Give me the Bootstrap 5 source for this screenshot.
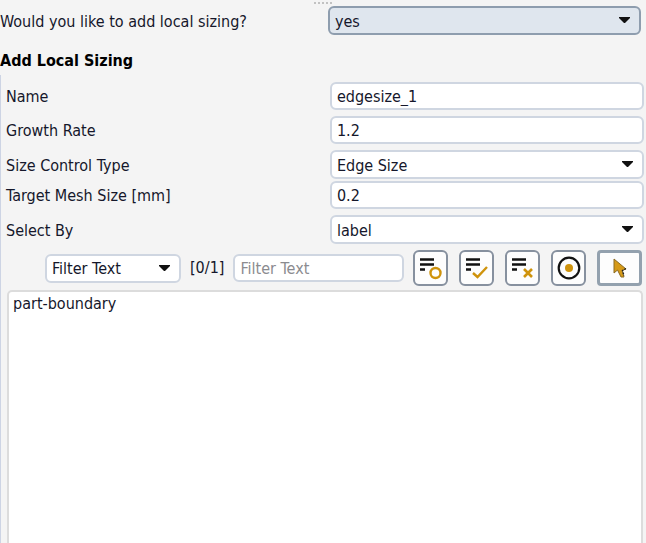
<!DOCTYPE html>
<html lang="en">
<head>
<meta charset="utf-8">
<meta name="viewport" content="width=device-width, initial-scale=1">
<title>Add Local Sizing</title>
<link href="https://cdn.jsdelivr.net/npm/bootstrap@5.3.0/dist/css/bootstrap.min.css" rel="stylesheet">
<style>
  body { background: #f4f4f4; color: #15172b; font: 16px/20px "DejaVu Sans Condensed", "Noto Sans", sans-serif; }
  .grip { height: 6px; }
  .grip svg { display: block; }
  .field-label { flex: 0 0 calc(51% + 1px); padding-top: 2px; }
  .section-title { font-size: 16px; line-height: 20px; color: #000; margin: 16px 0 4px; }
  .panel { border-left: 1px solid #cdd4e4; padding: 7px 2px 0 0; }
  .field-rows { gap: 6px; }
  .panel .field-label { padding-left: 5px; }
  .form-control, .form-select {
    height: 28px; min-height: 0; padding: 1px 5px 0; font-size: 16px; line-height: 20px;
    color: #15172b; background-color: #fff; border: 2px solid #cfd6e1; border-radius: 6px;
  }
  .form-select {
    height: 29px; padding-top: 2px; padding-right: 24px; background-size: 11px 6px; background-position: right 9px top 9px;
    background-image: url("data:image/svg+xml,%3Csvg xmlns='http://www.w3.org/2000/svg' viewBox='0 0 11 6'%3E%3Cpath d='M0 0h11v1L6 6H5L0 1z' fill='%23111'/%3E%3C/svg%3E");
  }
  .question { padding-right: 5px; }
  .question .form-select { background-color: #dfe6ee; border-color: #8e9dae; }
  .form-control::placeholder { color: #8b8b8f; opacity: 1; }
  .mesh-row { padding-top: 2px; }
  .filters { gap: 9px; padding: 0 2px 0 44px; margin-bottom: 4px; }
  .filters .form-select { flex: 0 0 136px; }
  .filters .form-control { flex: 1 1 0; min-width: 60px; }
  .tools { gap: 11px; }
  .tool { width: 35px; height: 36px; padding: 0; border: 2px solid #87919f; border-radius: 6px; background: #fdfdfd; display: flex; align-items: center; justify-content: center; }
  .tool-pick { width: 45px; border: 3px solid #93a1ae; border-radius: 4px; }
  .items { margin: 0 1px 0 6px; border: 2px solid #dcdcdc; border-bottom: 0; border-radius: 5px 5px 0 0; background: #fff; padding: 2px 4px; }
</style>
<script src="https://cdn.jsdelivr.net/npm/bootstrap@5.3.0/dist/js/bootstrap.bundle.min.js"></script>
</head>
<body>
<main class="d-flex flex-column min-vh-100">
  <div class="grip d-flex justify-content-center">
    <svg width="18" height="6" aria-hidden="true"><path d="M0 3h18" stroke="#c2c2c2" stroke-width="2" stroke-dasharray="2 2"/></svg>
  </div>
  <div class="question d-flex align-items-center">
    <label class="field-label" for="add">Would you like to add local sizing?</label>
    <select class="form-select" id="add"><option>yes</option><option>no</option></select>
  </div>
  <h1 class="section-title fw-bold">Add Local Sizing</h1>
  <section class="panel d-flex flex-column flex-grow-1">
    <div class="field-rows d-flex flex-column">
      <div class="d-flex align-items-center">
        <label class="field-label" for="name">Name</label>
        <input class="form-control" id="name" type="text" value="edgesize_1">
      </div>
      <div class="d-flex align-items-center">
        <label class="field-label" for="growth">Growth Rate</label>
        <input class="form-control" id="growth" type="text" value="1.2">
      </div>
      <div>
        <div class="d-flex align-items-center">
          <label class="field-label" for="type">Size Control Type</label>
          <select class="form-select" id="type"><option>Edge Size</option></select>
        </div>
        <div class="mesh-row d-flex align-items-center">
          <label class="field-label" for="mesh">Target Mesh Size [mm]</label>
          <input class="form-control" id="mesh" type="text" value="0.2">
        </div>
      </div>
      <div class="d-flex align-items-center">
        <label class="field-label" for="by">Select By</label>
        <select class="form-select" id="by"><option>label</option></select>
      </div>
      <div class="filters d-flex align-items-center">
        <select class="form-select" aria-label="Filter mode"><option>Filter Text</option></select>
        <span>[0/1]</span>
        <input class="form-control" type="text" placeholder="Filter Text" aria-label="Filter Text">
        <div class="tools d-flex">
          <button class="tool" type="button" aria-label="Deselect list">
            <svg width="24" height="24" fill="none"><path d="M1 3.500h14M1 8.500h14M1 13.500h5" stroke="#111" stroke-width="2.600"/><circle cx="16.500" cy="17" r="5" stroke="#cf930c" stroke-width="2.400"/></svg>
          </button>
          <button class="tool" type="button" aria-label="Select all">
            <svg width="24" height="24" fill="none"><path d="M1 3.500h14M1 8.500h14M1 13.500h5" stroke="#111" stroke-width="2.600"/><path d="M8 17l4.500 4L22 11" stroke="#cf930c" stroke-width="2.400"/></svg>
          </button>
          <button class="tool" type="button" aria-label="Clear selection">
            <svg width="24" height="24" fill="none"><path d="M1 3.500h14M1 8.500h14M1 13.500h5" stroke="#111" stroke-width="2.600"/><path d="M13 13l8 8M21 13l-8 8" stroke="#cf930c" stroke-width="2.600"/></svg>
          </button>
          <button class="tool" type="button" aria-label="Show selected">
            <svg width="24" height="24" fill="none"><circle cx="12" cy="12" r="10.300" stroke="#111" stroke-width="2.200"/><circle cx="12" cy="12" r="4" fill="#cf930c"/></svg>
          </button>
          <button class="tool tool-pick" type="button" aria-label="Pick in graphics">
            <svg width="14" height="20"><path d="M1 1v14l3.500-3 3.500 7h3l-2-6.500 4-1.500z" fill="#d69a17" stroke="#8a6a25" stroke-width="1"/><path d="M13 10.500l-3.500 2 1.500 5" stroke="#222" stroke-width="1.300" stroke-dasharray="2 1" fill="none"/></svg>
          </button>
        </div>
      </div>
    </div>
    <ul class="items list-unstyled flex-grow-1"><li>part-boundary</li></ul>
  </section>
</main>
</body>
</html>
